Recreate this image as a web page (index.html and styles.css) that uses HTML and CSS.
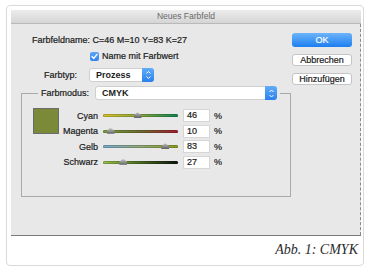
FILE: index.html
```html
<!DOCTYPE html>
<html lang="de">
<head>
<meta charset="utf-8">
<link rel="stylesheet" href="styles.css">
</head>
<body>
<div class="card">
  <div class="dialog">
    <div class="titlebar">Neues Farbfeld</div>
    <div class="dbody">
      <div class="main">
        <div class="name-row">Farbfeldname: C=46 M=10 Y=83 K=27</div>
        <div class="check-row"><span class="checkbox"><svg width="9" height="9" viewBox="0 0 9 9"><path d="M2 4.6 L3.8 6.4 L7 2.4" fill="none" stroke="#fff" stroke-width="1.4" stroke-linecap="round" stroke-linejoin="round"/></svg></span>Name mit Farbwert</div>
        <div class="type-row">
          <span class="type-label">Farbtyp:</span>
          <div class="popup popup-type"><span class="popup-text">Prozess</span><span class="stepper"><svg width="11" height="14" viewBox="0 0 11 14"><path d="M3.5 5.5 L5.5 3.5 L7.5 5.5 M3.5 8.5 L5.5 10.5 L7.5 8.5" fill="none" stroke="#fff" stroke-width="1"/></svg></span></div>
        </div>
        <fieldset class="group">
          <legend class="legend"><span class="legend-label">Farbmodus:</span><span class="popup popup-mode"><span class="popup-text">CMYK</span><span class="stepper"><svg width="11" height="13" viewBox="0 0 11 13"><path d="M3.5 5 L5.5 3 L7.5 5 M3.5 8 L5.5 10 L7.5 8" fill="none" stroke="#fff" stroke-width="1"/></svg></span></span></legend>
          <div class="group-content">
            <div class="swatch"></div>
            <div class="sliders">
              <div class="slider-row">
                <span class="slider-label">Cyan</span>
                <div class="track track-cyan"><span class="thumb" style="left:46%"></span></div>
                <span class="value">46</span><span class="pct">%</span>
              </div>
              <div class="slider-row">
                <span class="slider-label">Magenta</span>
                <div class="track track-magenta"><span class="thumb" style="left:10%"></span></div>
                <span class="value">10</span><span class="pct">%</span>
              </div>
              <div class="slider-row">
                <span class="slider-label">Gelb</span>
                <div class="track track-gelb"><span class="thumb" style="left:83%"></span></div>
                <span class="value">83</span><span class="pct">%</span>
              </div>
              <div class="slider-row">
                <span class="slider-label">Schwarz</span>
                <div class="track track-schwarz"><span class="thumb" style="left:27%"></span></div>
                <span class="value">27</span><span class="pct">%</span>
              </div>
            </div>
          </div>
        </fieldset>
      </div>
      <div class="buttons">
        <div class="btn btn-ok">OK</div>
        <div class="btn btn-plain">Abbrechen</div>
        <div class="btn btn-plain">Hinzufügen</div>
      </div>
    </div>
  </div>
  <div class="caption">Abb. 1: CMYK</div>
</div>
</body>
</html>
```
FILE: styles.css
```css
* { box-sizing: border-box; }
html, body { margin: 0; padding: 0; background: #fff; }
body { width: 370px; height: 272px; overflow: hidden; }

.card {
  margin: 5px 0 0 6px;
  width: 358px;
  height: 261px;
  border: 1px solid #d9d9d9;
  border-radius: 4px;
  padding: 4px 0 0 4px;
}

.dialog {
  width: 350px;
  height: 226px;
  background: #e8e8e8;
  border-bottom: 1px solid #7a7a7a;
  font-family: "Liberation Sans", Arial, sans-serif;
  font-size: 9px;
  color: #1a1a1a;
  -webkit-text-stroke: 0.2px #1a1a1a;
  display: flex;
  flex-direction: column;
}

.titlebar {
  height: 14px;
  background: linear-gradient(#ececec, #d5d5d5);
  border-bottom: 1px solid #b9b9b9;
  text-align: center;
  line-height: 13px;
  font-size: 8.5px;
  color: #6a6a6a;
  -webkit-text-stroke: 0;
}

.dbody {
  flex: 1;
  display: flex;
  padding-left: 10px;
  border-right: 1px dashed #8a8a8a;
}

.main {
  width: 270px;
  padding-top: 10px;
}

.name-row {
  height: 12px;
  line-height: 12px;
  padding-left: 11px;
}

.check-row {
  margin-top: 4px;
  height: 12px;
  line-height: 12px;
  padding-left: 69px;
  display: flex;
  align-items: center;
  gap: 3px;
}

.checkbox {
  width: 9px;
  height: 9px;
  border-radius: 2px;
  background: linear-gradient(#5aa6f8, #2f84ee);
  display: block;
}
.checkbox svg { display: block; }

.type-row {
  margin-top: 6px;
  height: 14px;
  display: flex;
  align-items: center;
}

.type-label {
  width: 56px;
  text-align: right;
}

.popup {
  height: 14px;
  background: #fff;
  border: 1px solid #cfcfcf;
  border-radius: 3px;
  display: flex;
  align-items: center;
  justify-content: space-between;
  font-weight: bold;
  -webkit-text-stroke: 0;
  color: #222;
}
.popup-text { padding-left: 6px; }

.stepper {
  width: 12px;
  height: calc(100% + 2px);
  margin: -1px -1px -1px 0;
  border-radius: 0 3px 3px 0;
  background: linear-gradient(#62acf8, #2a80ef);
  display: flex;
  align-items: center;
  justify-content: center;
}
.stepper svg { display: block; }

.popup-type {
  margin-left: 12px;
  width: 65px;
}

.group {
  margin: 4px 0 0 0;
  padding: 0 0 0 11px;
  width: 270px;
  height: 111px;
  border: 1px solid #a9a9a9;
  min-width: 0;
}

.legend {
  margin-left: 5px;
  padding: 0 3px;
  display: flex;
  align-items: center;
  gap: 6px;
  height: 14px;
}

.popup-mode {
  width: 182px;
  height: 14px;
}

.group-content {
  display: flex;
  padding-top: 8px;
}

.swatch {
  width: 26px;
  height: 26px;
  background: #7a8a39;
  border: 1px solid #6b6b6b;
  flex: none;
}

.sliders {
  display: flex;
  flex-direction: column;
}

.slider-row {
  height: 15.5px;
  display: flex;
  align-items: center;
}

.slider-label {
  width: 39px;
  text-align: right;
}

.track {
  position: relative;
  margin-left: 5px;
  width: 75px;
  height: 3px;
  border-radius: 1.5px;
  box-shadow: inset 0 0 0 0.5px rgba(0,0,0,0.35);
}
.track-cyan { background: linear-gradient(90deg, #d6c22a, #8fa83a 45%, #0d8550); }
.track-magenta { background: linear-gradient(90deg, #78a038, #6e6a30 50%, #a0202c); }
.track-gelb { background: linear-gradient(90deg, #78a8cc, #8ea876 50%, #8a9c1c); }
.track-schwarz { background: linear-gradient(90deg, #96c04a, #4a6a22 50%, #0c140a); }

.thumb {
  position: absolute;
  top: -2px;
  width: 8px;
  height: 6px;
  transform: translateX(-50%);
  background: linear-gradient(#c8c8c8, #5e5e5e);
  clip-path: polygon(50% 0, 100% 50%, 100% 100%, 0 100%, 0 50%);
}

.value {
  margin-left: 5px;
  width: 27px;
  height: 13px;
  background: #fff;
  border: 1px solid #d6d6d6;
  line-height: 11px;
  padding-left: 3px;
}

.pct {
  margin-left: 4px;
}

.buttons {
  width: 60px;
  margin-left: 1px;
  padding-top: 9px;
  display: flex;
  flex-direction: column;
}

.btn {
  border-radius: 3px;
  text-align: center;
}

.btn-ok {
  height: 14px;
  line-height: 14px;
  background: linear-gradient(#6db4fa, #1c7ef0);
  color: #fff;
  -webkit-text-stroke: 0.2px #fff;
}

.btn-plain {
  margin-top: 7px;
  height: 12px;
  line-height: 10px;
  background: #fff;
  border: 1px solid #c4c4c4;
}

.caption {
  margin-top: 6px;
  padding-right: 5px;
  text-align: right;
  font-family: "Liberation Serif", "Times New Roman", serif;
  font-style: italic;
  font-size: 14px;
  line-height: 16px;
  color: #2a2a2a;
}
```
